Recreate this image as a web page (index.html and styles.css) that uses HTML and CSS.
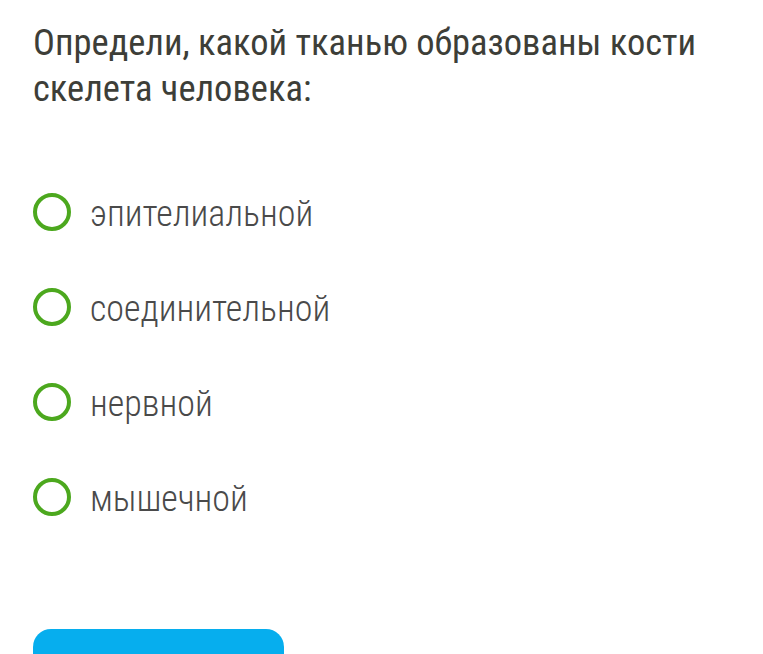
FILE: index.html
```html
<!DOCTYPE html>
<html lang="ru">
<head>
<meta charset="utf-8">
<link rel="stylesheet" href="styles.css">
</head>
<body>
<div class="page">
  <h1 class="question">Определи, какой тканью образованы кости скелета человека:</h1>
  <ul class="options">
    <li class="option"><span class="radio"></span><span class="label">эпителиальной</span></li>
    <li class="option"><span class="radio"></span><span class="label">соединительной</span></li>
    <li class="option"><span class="radio"></span><span class="label">нервной</span></li>
    <li class="option"><span class="radio"></span><span class="label">мышечной</span></li>
  </ul>
  <button class="submit" type="button"></button>
</div>
</body>
</html>
```
FILE: styles.css
```css
html, body {
  margin: 0;
  padding: 0;
  background: #ffffff;
}
body {
  width: 763px;
  height: 654px;
  overflow: hidden;
}
.page {
  box-sizing: border-box;
  height: 654px;
  overflow: hidden;
  padding: 20px 20px 0 33px;
  display: flex;
  flex-direction: column;
  align-items: flex-start;
}
.question {
  margin: 0;
  font-family: Roboto, "Liberation Sans", sans-serif;
  font-stretch: 75%;
  font-weight: 400;
  font-size: 36.5px;
  line-height: 46px;
  color: #3d3e38;
  width: 710px;
}
.options {
  list-style: none;
  margin: 81px 0 0 0;
  padding: 0;
  display: flex;
  flex-direction: column;
  gap: 57px;
}
.option {
  display: flex;
  align-items: center;
  gap: 19px;
  height: 38px;
}
.radio {
  box-sizing: border-box;
  width: 38px;
  height: 38px;
  border: 4px solid #4ca81e;
  border-radius: 50%;
  flex: none;
}
.label {
  font-family: Roboto, "Liberation Sans", sans-serif;
  font-stretch: 75%;
  font-weight: 300;
  font-size: 36px;
  color: #4a4a4a;
  line-height: 38px;
  padding-top: 4px;
}
.submit {
  margin-top: 113px;
  width: 251px;
  height: 25px;
  flex: none;
  border: none;
  border-radius: 18px 18px 0 0;
  background: #06aeee;
  padding: 0;
}
```
